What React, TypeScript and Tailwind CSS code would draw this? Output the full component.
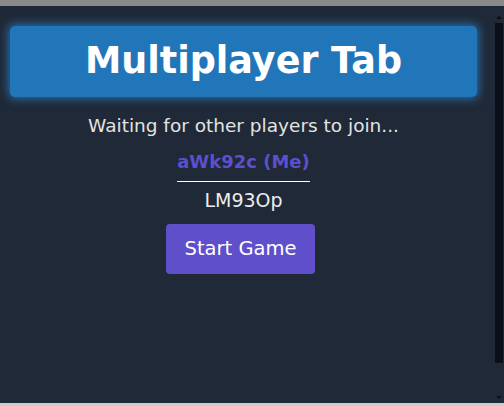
import React from 'react';

const players = [
  { id: 'aWk92c', me: true },
  { id: 'LM93Op', me: false },
];

export default function App() {
  return (
    <div
      className="w-[504px] h-[406px] flex flex-col bg-[#1f2937] overflow-hidden"
      style={{ fontFamily: '"DejaVu Sans", "Noto Sans", sans-serif' }}
    >
      {/* window chrome strip */}
      <div className="h-[6px] bg-[#8a8a8a]" />

      <div className="flex-1 flex">
        {/* Content */}
        <div className="w-[487px] px-[10px] pt-[20px] flex flex-col items-center">
          <div className="w-full h-[71px] rounded-[5px] bg-[#2176b9] shadow-[0_0_10px_2px_rgba(47,128,200,0.75)] flex items-center justify-center">
            <h1 className="text-white font-bold text-[36.5px] leading-none">Multiplayer Tab</h1>
          </div>

          <p className="mt-[17px] text-[18.5px] leading-[24px] text-[#e3e3e3]">Waiting for other players to join...</p>

          <div className="mt-[12px] flex flex-col items-center">
            {players.map((p) =>
              p.me ? (
                <span
                  key={p.id}
                  className="inline-block pb-[7px] border-b border-white text-[18px] leading-[24px] font-bold text-[#5d4fd0]"
                >
                  {p.id} (Me)
                </span>
              ) : (
                <span key={p.id} className="mt-[6px] text-[19px] leading-[24px] text-[#ececec]">
                  {p.id}
                </span>
              )
            )}
          </div>

          <button className="mt-[12px] mr-[6px] w-[149px] h-[50px] rounded-[4px] bg-[#604fcb] text-white text-[19.5px]">
            Start Game
          </button>
        </div>

        <div className="flex-1" />

        {/* Scrollbar */}
        <div className="w-[11px] flex flex-col items-center">
          <div className="h-[17px] flex items-end justify-center pb-[4px]">
            <div className="w-0 h-0 border-l-[3px] border-r-[3px] border-b-[3px] border-l-transparent border-r-transparent border-b-[#0b0f17]" />
          </div>
          <div className="w-[8px] h-[340px] bg-[#0b0f17]" />
          <div className="flex-1 flex items-end justify-center pb-[4px]">
            <div className="w-0 h-0 border-l-[3px] border-r-[3px] border-t-[3px] border-l-transparent border-r-transparent border-t-[#0b0f17]" />
          </div>
        </div>
      </div>

      <div className="h-[3px] bg-[#cccccc]" />
    </div>
  );
}
